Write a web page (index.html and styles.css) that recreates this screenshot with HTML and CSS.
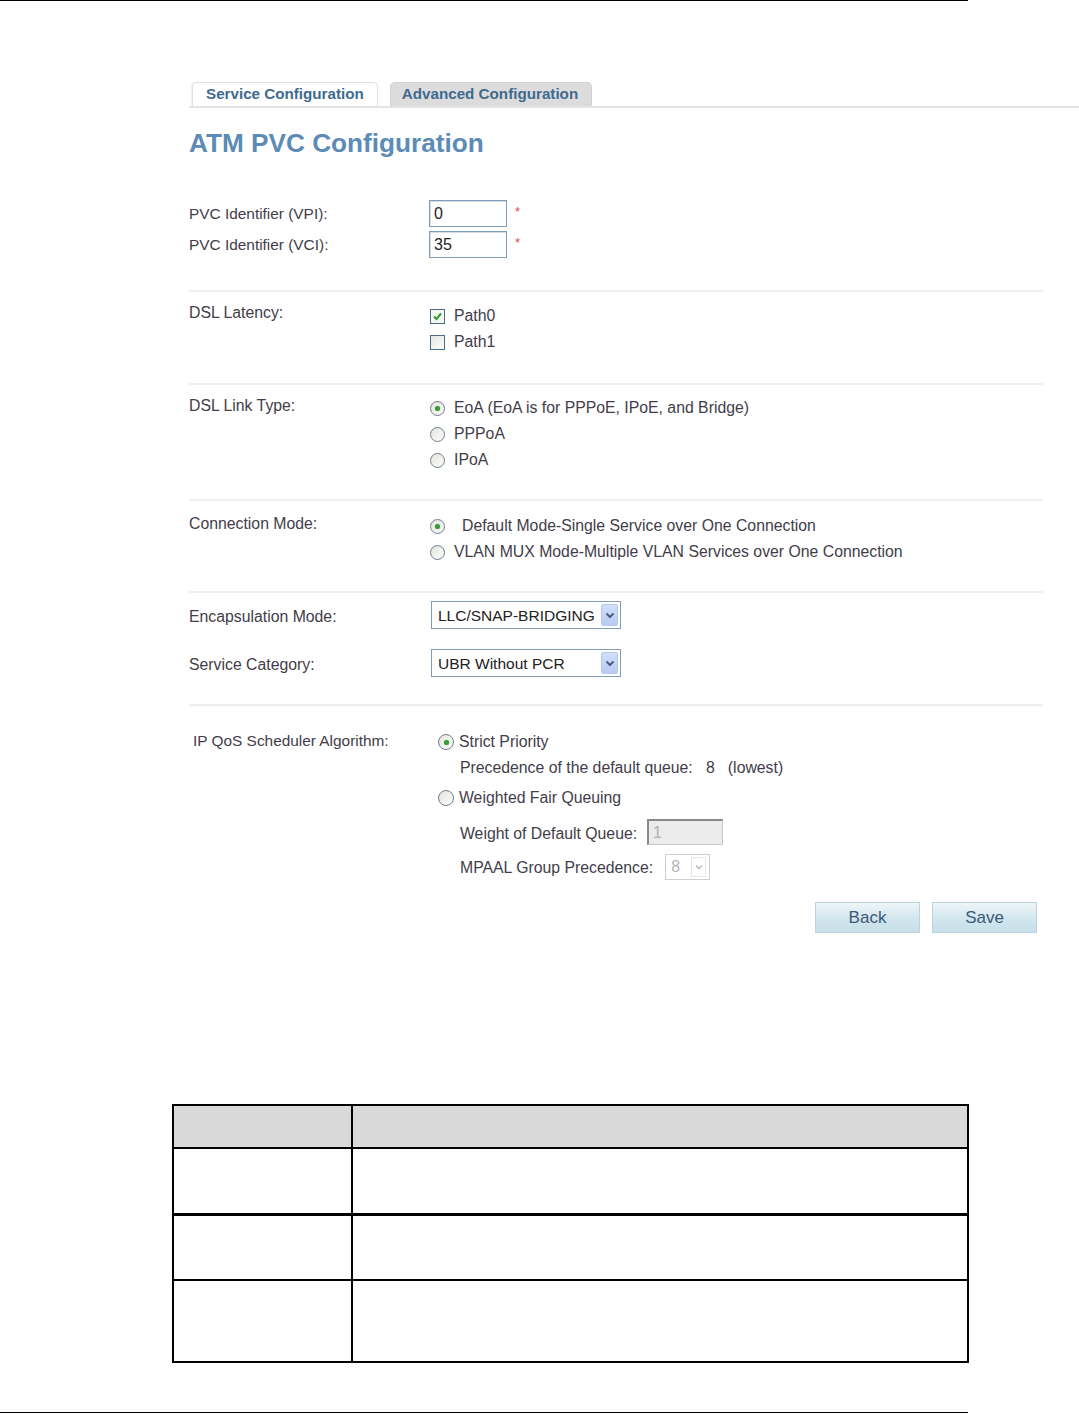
FILE: index.html
```html
<!DOCTYPE html>
<html lang="en">
<head>
    <meta charset="UTF-8">
    <title>ATM PVC Configuration</title>
    <link rel="stylesheet" href="styles.css">
</head>
<body>
    <div class="rule"></div>

    <div class="shot">
        <div class="tabs">
            <div class="tab current">Service Configuration</div>
            <div class="tab">Advanced Configuration</div>
        </div>
        <h1 class="title">ATM PVC Configuration</h1>

        <!-- PVC identifiers -->
        <div class="sec sec1">
            <div class="row">
                <div class="lbl">PVC Identifier (VPI):</div>
                <div class="val"><span class="txt">0</span><span class="req">*</span></div>
            </div>
            <div class="row row-gap">
                <div class="lbl">PVC Identifier (VCI):</div>
                <div class="val"><span class="txt">35</span><span class="req">*</span></div>
            </div>
        </div>

        <!-- latency -->
        <div class="sec sec2">
            <div class="row">
                <div class="lbl">DSL Latency:</div>
                <div class="opts">
                    <div class="opt"><span class="chk on"><svg width="11" height="11" viewBox="0 0 11 11"><polyline points="2,5.5 4.5,8 9,2.5" fill="none" stroke="#2e9b2e" stroke-width="2"/></svg></span>Path0</div>
                    <div class="opt"><span class="chk"></span>Path1</div>
                </div>
            </div>
        </div>

        <!-- link type -->
        <div class="sec sec3">
            <div class="row">
                <div class="lbl">DSL Link Type:</div>
                <div class="opts">
                    <div class="opt"><span class="rad on"></span>EoA (EoA is for PPPoE, IPoE, and Bridge)</div>
                    <div class="opt"><span class="rad"></span>PPPoA</div>
                    <div class="opt"><span class="rad"></span>IPoA</div>
                </div>
            </div>
        </div>

        <!-- connection mode -->
        <div class="sec sec4">
            <div class="row">
                <div class="lbl">Connection Mode:</div>
                <div class="opts">
                    <div class="opt"><span class="rad on"></span><span class="pad">Default Mode-Single Service over One Connection</span></div>
                    <div class="opt"><span class="rad"></span>VLAN MUX Mode-Multiple VLAN Services over One Connection</div>
                </div>
            </div>
        </div>

        <!-- encapsulation -->
        <div class="sec sec5">
            <div class="row">
                <div class="lbl">Encapsulation Mode:</div>
                <div class="sel"><span class="sel-txt">LLC/SNAP-BRIDGING</span><span class="arr"><svg width="10" height="7" viewBox="0 0 10 7"><polyline points="1.5,1.5 5,5 8.5,1.5" fill="none" stroke="#4a5f86" stroke-width="2"/></svg></span></div>
            </div>
            <div class="row row-gap2">
                <div class="lbl">Service Category:</div>
                <div class="sel"><span class="sel-txt">UBR Without PCR</span><span class="arr"><svg width="10" height="7" viewBox="0 0 10 7"><polyline points="1.5,1.5 5,5 8.5,1.5" fill="none" stroke="#4a5f86" stroke-width="2"/></svg></span></div>
            </div>
        </div>

        <!-- qos -->
        <div class="sec sec6">
            <div class="row">
                <div class="lbl lbl-qos">IP QoS Scheduler Algorithm:</div>
                <div class="qos">
                    <div class="qrow"><span class="rad on"></span><span class="q-txt">Strict Priority</span></div>
                    <div class="qrow q2 sub">Precedence of the default queue:&nbsp;&nbsp; 8 &nbsp;&nbsp;(lowest)</div>
                    <div class="qrow q3"><span class="rad"></span><span class="q-txt">Weighted Fair Queuing</span></div>
                    <div class="qrow q4 sub"><span class="q-lbl">Weight of Default Queue:</span><span class="dis-in">1</span></div>
                    <div class="qrow q5 sub"><span class="q-lbl">MPAAL Group Precedence:</span><span class="dis-sel">8<span class="dis-arr"><svg width="8" height="6" viewBox="0 0 8 6"><polyline points="1,1.5 4,4.5 7,1.5" fill="none" stroke="#b8b8b8" stroke-width="1.3"/></svg></span></span></div>
                </div>
            </div>
            <div class="btns">
                <div class="btn">Back</div>
                <div class="btn">Save</div>
            </div>
        </div>
    </div>

    <table class="desc">
        <tr class="hd"><td class="c1"></td><td></td></tr>
        <tr class="r1"><td class="c1"></td><td></td></tr>
        <tr class="r2"><td class="c1"></td><td></td></tr>
        <tr class="r3"><td class="c1"></td><td></td></tr>
    </table>

    <div class="rule rule-bot"></div>
</body>
</html>
```

FILE: styles.css
```css
* {
    margin: 0;
    padding: 0;
    box-sizing: border-box;
}
body {
    background: #fff;
    font-family: "Liberation Sans", Arial, sans-serif;
    color: #433d4a;
    width: 1079px;
    height: 1414px;
    overflow: hidden;
}
.rule {
    width: 968px;
    height: 1px;
    background: #000;
}
.rule-bot {
    margin-top: 49px;
}

/* screenshot of the router page */
.shot {
    padding: 81px 0 0 189px;
}
.tabs {
    display: flex;
    align-items: flex-end;
    gap: 12px;
    height: 26px;
    padding-left: 3px;
    border-bottom: 2px solid #e4e4e4;
}
.tab {
    height: 24px;
    line-height: 22px;
    padding: 0 13px 0 11px;
    font-size: 15.2px;
    font-weight: bold;
    color: #3f6a8f;
    background: #dcdcdc;
    border: 1px solid #d2d2d2;
    border-bottom: 0;
    border-radius: 5px 5px 0 0;
}
.tab.current {
    background: #fff;
    border-color: #e0e0e0;
    padding: 0 13px 0 13px;
    box-shadow: -1px 0 0 #f0f0f0;
}
.title {
    margin-top: 19px;
    height: 32px;
    line-height: 32px;
    font-size: 26.2px;
    font-weight: bold;
    color: #5b8bb6;
}

.sec {
    width: 854px;
    border-bottom: 2px solid #efefef;
}
.row {
    display: flex;
    align-items: flex-start;
}
.lbl {
    width: 240px;
    font-size: 15.8px;
    line-height: 27px;
    flex: none;
}
.sec1 {
    padding: 41px 0 32px;
}
.sec1 .lbl {
    font-size: 15.4px;
}
.row-gap {
    margin-top: 4px;
}
.val {
    display: flex;
    align-items: flex-start;
}
.txt {
    width: 78px;
    height: 27px;
    line-height: 25px;
    padding-left: 4px;
    font-size: 16px;
    color: #222;
    border: 1px solid #7f9db9;
    box-shadow: inset 1px 1px 0 #d6dde6;
}
.req {
    color: #e04848;
    font-size: 13px;
    line-height: 14px;
    margin-left: 8px;
    margin-top: 5px;
}

.opts {
    display: flex;
    flex-direction: column;
}
.opt {
    display: flex;
    align-items: center;
    height: 26px;
    font-size: 15.8px;
    padding-left: 1px;
}
.sec2 {
    padding: 10px 0 29px;
}
.sec2 .lbl, .sec3 .lbl, .sec4 .lbl {
    line-height: 24px;
    margin-top: -1px;
}
.sec2 .opt {
    padding-top: 2px;
}
.sec3 {
    padding: 10px 0 26px;
}
.sec4 {
    padding: 12px 0 26px;
}
.pad {
    padding-left: 8px;
}
.chk {
    width: 15px;
    height: 15px;
    margin-right: 9px;
    border: 1px solid #4c6a8c;
    background: linear-gradient(135deg, #e7e7e1, #fbfbf9);
    display: flex;
    align-items: center;
    justify-content: center;
}
.chk.on {
    background: #f4f6f2;
}
.rad {
    width: 15px;
    height: 15px;
    margin-right: 9px;
    border: 1px solid #6e7f90;
    border-radius: 50%;
    background: linear-gradient(135deg, #e4e4de, #fdfdfb);
    display: flex;
    align-items: center;
    justify-content: center;
    flex: none;
}
.rad.on::after {
    content: "";
    width: 5px;
    height: 5px;
    border-radius: 50%;
    background: #3a9a3a;
    box-shadow: 0 0 1px #5fc05f;
}

.sec5 {
    padding: 8px 0 27px;
}
.sec5 .lbl {
    height: 28px;
    line-height: 31px;
}
.sel-txt {
    padding-top: 2px;
}
.row-gap2 {
    margin-top: 20px;
}
.sel {
    margin-left: 2px;
    width: 190px;
    height: 28px;
    border: 1px solid #7f9db9;
    display: flex;
    align-items: center;
    justify-content: space-between;
    padding: 0 2px 0 6px;
    font-size: 15.5px;
    color: #222;
}
.arr {
    width: 17px;
    height: 22px;
    background: linear-gradient(#d2defa, #b7caf3);
    border: 1px solid #b7c8ef;
    border-radius: 2px;
    display: flex;
    align-items: center;
    justify-content: center;
}

.sec6 {
    padding-top: 23px;
    border-bottom: 0;
}
.lbl-qos {
    padding-left: 4px;
    width: 249px;
    line-height: 24px;
    font-size: 15.4px;
}
.qos {
    display: flex;
    flex-direction: column;
    font-size: 15.8px;
}
.qrow {
    display: flex;
    align-items: center;
    height: 26px;
}
.qrow .rad {
    width: 16px;
    height: 16px;
    margin-right: 5px;
}
.q3 {
    margin-top: 4px;
}
.q4 {
    margin-top: 8px;
}
.q4 .q-lbl {
    padding-top: 4px;
}
.q5 {
    margin-top: 9px;
}
.q5 .q-lbl {
    padding-top: 2px;
}
.sub {
    padding-left: 22px;
}
.dis-in {
    margin-left: 10px;
    width: 76px;
    height: 26px;
    line-height: 24px;
    padding-left: 4px;
    color: #b0b0b0;
    background: #ececec;
    border: 1px solid #c8c8c8;
    border-top: 2px solid #8a8a8a;
    border-left: 2px solid #8a8a8a;
}
.dis-sel {
    margin-left: 12px;
    width: 45px;
    height: 26px;
    padding-left: 5px;
    color: #b4b4b4;
    border: 1px solid #cfcfcf;
    display: flex;
    align-items: center;
    justify-content: space-between;
    padding-right: 3px;
}
.dis-arr {
    width: 15px;
    height: 20px;
    display: flex;
    align-items: center;
    justify-content: center;
    border: 1px solid #e6e6e6;
}

.btns {
    display: flex;
    justify-content: flex-end;
    gap: 12px;
    margin-top: 22px;
    padding-right: 6px;
}
.btn {
    width: 105px;
    height: 31px;
    line-height: 29px;
    text-align: center;
    font-size: 17px;
    color: #3c5878;
    border: 1px solid #bcd2dc;
    background: linear-gradient(#eef6f9, #d2e6ee 55%, #c6dfe9);
}

/* table below the screenshot */
.desc {
    margin: 171px 0 0 172px;
    width: 797px;
    border-collapse: collapse;
}
.desc td {
    border: 2px solid #000;
}
.desc .c1 {
    width: 179px;
}
.desc .hd td {
    height: 43px;
    background: #d9d9d9;
}
.desc .r1 td {
    height: 66px;
}
.desc .r2 td {
    height: 66px;
    border-top: 3px solid #000;
}
.desc .r3 td {
    height: 82px;
}
```
